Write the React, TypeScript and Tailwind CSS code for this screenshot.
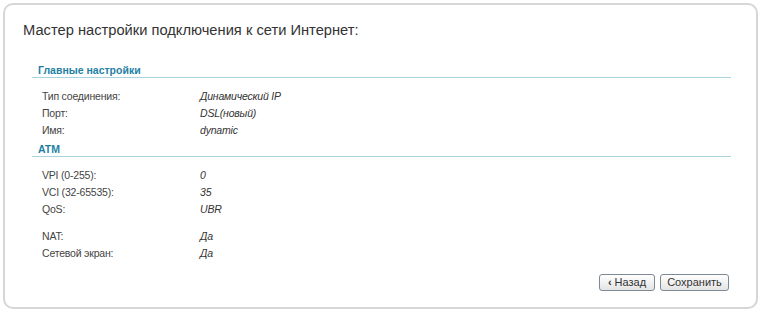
const mainRows = [
  { label: 'Тип соединения:', value: 'Динамический IP' },
  { label: 'Порт:', value: 'DSL(новый)' },
  { label: 'Имя:', value: 'dynamic' },
];

const atmRows = [
  { label: 'VPI (0-255):', value: '0' },
  { label: 'VCI (32-65535):', value: '35' },
  { label: 'QoS:', value: 'UBR' },
];

const natRows = [
  { label: 'NAT:', value: 'Да' },
  { label: 'Сетевой экран:', value: 'Да' },
];

const font = { fontFamily: '"Liberation Sans", Arial, sans-serif' };

const SectionHeader = ({ title }: { title: string }) => (
  <div className="ml-[27px] mr-[25px] h-[15px] border-b border-[#a9d4dd] pl-[6px] text-[10.5px] leading-[14px] font-bold text-[#1f7fa3]">
    {title}
  </div>
);

const Row = ({ label, value }: { label: string; value: string }) => (
  <div className="flex h-[17px] items-center pl-[37px] text-[10.5px] tracking-[-0.2px] text-[#444]">
    <span className="w-[158px]">{label}</span>
    <span className="italic text-[#333]">{value}</span>
  </div>
);

const App = () => {
  return (
    <div className="h-[317px] w-[765px] bg-white p-[3px]" style={font}>
      <div className="flex h-[306px] w-[755px] flex-col rounded-[10px] border-2 border-[#d6d6d6]">
        <h1 className="pt-[17px] pl-[18px] text-[14.7px] leading-[17px] text-[#333]">
          Мастер настройки подключения к сети Интернет:
        </h1>

        <div className="mt-[24px]">
          <SectionHeader title="Главные настройки" />
        </div>
        <div className="mt-[10px]">
          {mainRows.map(row => (
            <Row key={row.label} {...row} />
          ))}
        </div>

        <div className="mt-[3px]">
          <SectionHeader title="ATM" />
        </div>
        <div className="mt-[10px]">
          {atmRows.map(row => (
            <Row key={row.label} {...row} />
          ))}
        </div>
        <div className="mt-[10px]">
          {natRows.map(row => (
            <Row key={row.label} {...row} />
          ))}
        </div>

        <div className="mt-[12px] flex justify-end gap-[5px] pr-[27px]">
          <button className="h-[17px] w-[56px] rounded-[3px] border border-[#7d8a96] bg-gradient-to-b from-white to-[#e4e4e4] text-[11px] leading-[15px] text-[#333]">
            <span className="font-bold">‹</span> Назад
          </button>
          <button className="h-[17px] w-[69px] rounded-[3px] border border-[#7d8a96] bg-gradient-to-b from-white to-[#e4e4e4] text-[11px] leading-[15px] text-[#333]">
            Сохранить
          </button>
        </div>
      </div>
    </div>
  );
};

export default App;
